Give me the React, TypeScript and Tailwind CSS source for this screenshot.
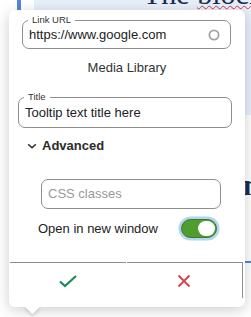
import React from 'react';

const OutlinedField = ({
  label,
  value,
  className,
  children,
}: {
  label?: string;
  value: string;
  className: string;
  children?: React.ReactNode;
}) => (
  <div className={`relative flex items-center rounded-[7px] border border-[#8e8e8e] pl-[6px] ${className}`}>
    {label && (
      <span className="absolute left-[5px] top-[-6px] bg-white px-[4px] text-[9.5px] leading-[10px] text-[#333]">
        {label}
      </span>
    )}
    <span className="text-[13px] leading-[16px] text-[#222]">{value}</span>
    {children}
  </div>
);

const App = () => {
  return (
    <div className="relative h-[317px] w-[251px] overflow-hidden bg-white font-['Liberation_Sans',Arial,sans-serif]">
      {/* page behind the popover */}
      <div className="flex">
        <div className="ml-[17px] h-[120px] w-[4px] bg-[#4f86d8]" />
        <div className="ml-[13px] h-[115px] flex-1 overflow-hidden bg-[#e7effa]">
          <div className="relative mt-[-21px] ml-[109px] whitespace-nowrap font-['Liberation_Serif',serif] text-[30px] leading-[30px] text-[#1f2d4d]">
            The <span className="underline decoration-wavy decoration-[#d23b3b] decoration-1">blocking</span>
          </div>
        </div>
      </div>
      <div className="absolute left-[243px] top-[170px] font-['Liberation_Serif',serif] text-[30px] font-bold leading-[30px] text-[#1f2d4d]">
        n
      </div>
      <div className="absolute left-[245px] top-[261px] h-[2px] w-[6px] bg-[#4f86d8]" />

      {/* link popover */}
      <div className="absolute left-[9px] top-[10px] w-[236px] rounded-md bg-white pb-[9px] shadow-[0_3px_14px_rgba(0,0,0,0.2)]">
        <OutlinedField label="Link URL" value="https://www.google.com" className="ml-[13px] mt-[10px] h-[29px] w-[209px] pr-[10px]">
          <svg className="ml-auto" width="12" height="12" viewBox="0 0 12 12">
            <circle cx="6" cy="6" r="4.6" fill="none" stroke="#a3a3a3" strokeWidth="1.8" />
          </svg>
        </OutlinedField>

        <div className="mt-[11px] text-center text-[13px] leading-[16px] text-[#333]">Media Library</div>

        <OutlinedField label="Title" value="Tooltip text title here" className="ml-[9px] mt-[21px] h-[31px] w-[214px]" />

        <div className="ml-[18px] mt-[10px] flex h-[16px] items-center gap-[5px]">
          <svg width="10" height="10" viewBox="0 0 10 10">
            <path d="M1.2 3.2 L5 6.8 L8.8 3.2" fill="none" stroke="#2b2b2b" strokeWidth="1.5" />
          </svg>
          <span className="text-[13px] font-bold leading-[16px] text-[#2b2b2b]">Advanced</span>
        </div>

        <div className="ml-[32px] mt-[25px] flex h-[30px] w-[180px] items-center rounded-[7px] border border-[#8e8e8e] pl-[6px]">
          <span className="text-[13px] leading-[16px] text-[#9a9a9a]">CSS classes</span>
        </div>

        <div className="ml-[29px] mr-[28px] mt-[10px] flex h-[19px] items-center justify-between">
          <span className="text-[13px] leading-[16px] text-[#222]">Open in new window</span>
          <div className="flex h-[19px] w-[36px] items-center justify-end rounded-full border border-[#3a7d22] bg-[#4f9c30] pr-[1px] shadow-[0_0_0_2.5px_#b5d3f6]">
            <div className="h-[15px] w-[17px] rounded-full bg-white" />
          </div>
        </div>

        <div className="ml-[1px] mr-[2px] mt-[24px] flex h-[36px] gap-[1px]">
          <button className="flex flex-1 items-center justify-center border-t border-[#8e8e8e]">
            <svg width="20" height="16" viewBox="0 0 20 16">
              <path d="M2 8.5 L7 13 L18 3" fill="none" stroke="#1c8a5c" strokeWidth="2.2" />
            </svg>
          </button>
          <button className="flex flex-1 items-center justify-center border-r border-t border-[#8e8e8e]">
            <svg width="14" height="14" viewBox="0 0 14 14">
              <path d="M1.5 1.5 L12.5 12.5 M12.5 1.5 L1.5 12.5" fill="none" stroke="#d04a4f" strokeWidth="2" />
            </svg>
          </button>
        </div>

        <div className="absolute left-[18px] top-[291px] h-[11px] w-[11px] rotate-45 bg-white shadow-[2px_2px_3px_rgba(0,0,0,0.12)]" />
      </div>
    </div>
  );
};

export default App;
